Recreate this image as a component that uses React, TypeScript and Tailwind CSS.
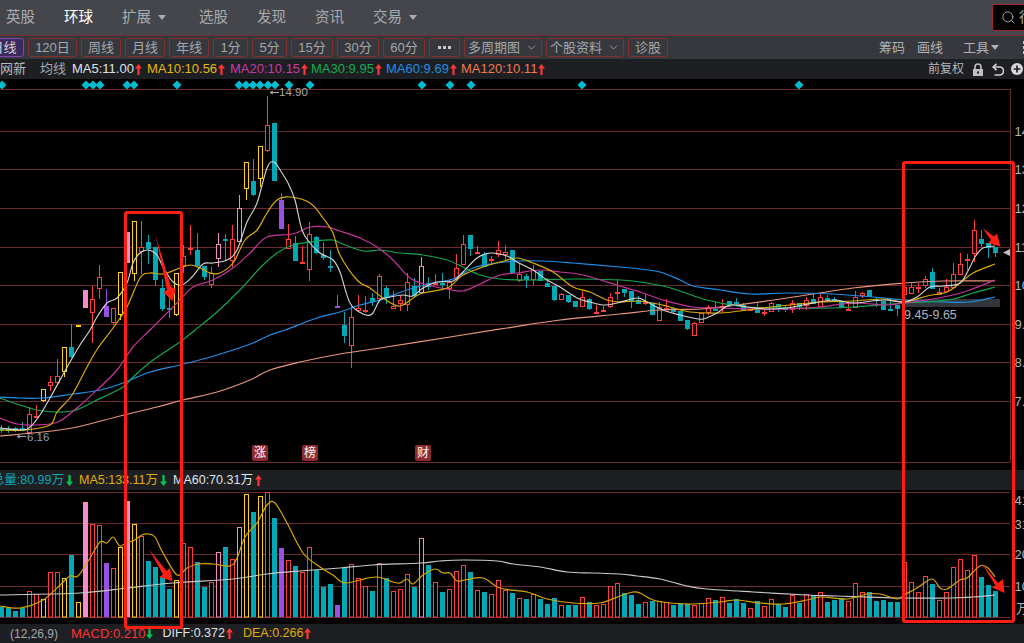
import React from "react";
import { ChevronDown, Search } from "lucide-react";

type Row = [string, number, number, number, number, number];
const D: Row[] = [
["c",428,431,425,433,607],["c",429,430,426,433,608],["c",428,430,427,432,611],["c",428,431,422,431,608],
["r",414,433,407,434,591],["r",416,417,405,417,594],["y",389,401,389,402,599],["r",382,386,376,391,572],
["r",376,383,359,385,572],["y",347,372,347,377,578],["c",347,357,324,358,555],["y",325,326,325,326,602],
["p",290,308,290,308,502],["r",299,313,286,343,524],["r",277,289,265,299,525],["v",306,317,289,317,563],
["r",308,323,308,325,568],["y",272,315,272,320,547],["p",232,263,232,263,501],["y",221,274,221,281,524],
["r",247,252,221,274,536],["c",242,249,235,264,561],["c",247,280,247,286,567],["c",288,309,279,311,577],
["c",308,310,298,318,589],["y",273,315,273,316,580],["r",256,266,245,273,543],["r",248,250,225,255,547],
["c",250,266,233,267,562],["c",266,277,266,280,587],["r",273,285,267,288,582],["h",244,259,233,267,552],
["c",239,241,234,260,547],["r",239,261,225,267,559],["h",208,242,195,242,527],["y",162,189,162,200,494],
["c",181,195,159,196,512],["y",146,179,146,187,496],["r",125,151,96,152,492],["c",123,181,123,181,518],
["v",200,229,193,229,548],["r",239,249,224,249,560],["c",243,261,236,261,566],["r",262,263,246,263,572],
["r",234,270,222,281,547],["c",237,253,236,254,570],["c",255,258,242,260,587],["c",266,267,250,272,584],
["v",306,307,295,307,605],["c",325,336,312,343,568],["r",317,346,306,368,564],["r",308,311,295,312,578],
["r",310,311,296,313,586],["c",298,302,293,306,591],["r",276,299,274,299,563],["c",288,298,286,304,578],
["r",306,309,291,309,591],["r",300,304,296,311,589],["r",282,305,273,311,574],["c",286,296,278,297,587],
["h",266,293,257,293,538],["c",283,287,277,290,565],["r",283,285,274,285,582],["c",283,284,273,290,592],
["r",282,289,280,299,589],["r",268,279,254,280,571],["r",244,265,235,265,565],["c",235,249,235,256,572],
["r",252,254,246,254,590],["c",254,267,252,267,592],["r",259,260,256,265,594],["r",250,255,241,257,580],
["r",252,255,245,260,590],["c",250,273,250,273,593],["r",274,281,263,282,598],["c",276,280,274,288,599],
["r",270,280,265,285,594],["c",271,281,271,281,599],["c",283,287,278,287,604],["c",286,300,286,301,598],
["r",294,300,293,300,605],["c",295,302,295,303,605],["c",301,307,301,307,605],["r",297,307,291,307,597],
["c",299,309,298,310,602],["r",312,313,305,313,605],["r",310,311,306,311,604],["r",297,307,293,308,586],
["r",292,293,279,300,583],["c",289,293,289,297,593],["c",291,302,291,308,595],["c",300,304,296,304,604],
["r",302,303,294,305,602],["c",303,315,303,315,601],["r",307,321,302,321,601],["r",308,309,299,309,602],
["c",308,312,308,314,605],["c",311,321,311,321,603],["c",320,329,320,330,604],["r",323,336,322,336,605],
["r",313,323,313,323,603],["r",307,313,305,315,598],["c",309,310,302,311,600],["r",306,308,299,312,597],
["c",301,304,301,307,603],["c",302,303,298,305,599],["c",305,311,303,311,603],["r",309,311,309,311,608],
["c",309,313,303,313,601],["r",312,314,309,316,606],["r",303,312,302,312,599],["c",304,308,304,312,604],
["c",307,310,305,312,607],["r",303,310,300,313,595],["c",303,307,303,310,603],["r",300,306,297,310,594],
["c",299,304,294,304,595],["r",297,307,293,307,592],["c",298,299,295,302,602],["c",299,302,297,302,600],
["c",302,308,302,308,598],["r",309,310,302,311,601],["r",297,308,291,308,583],["r",293,296,292,298,592],
["c",290,297,290,297,592],["c",299,300,297,307,601],["c",301,310,301,310,600],["c",309,310,298,310,602],
["c",305,309,305,316,602],["r",287,295,274,296,562],["r",287,294,282,294,582],["r",287,288,283,293,592],
["r",279,286,276,288,576],["c",272,289,268,289,584],["r",292,295,288,295,600],["r",287,292,279,292,592],
["r",274,288,263,288,567],["r",264,275,253,275,559],["r",259,260,254,270,570],["r",230,254,220,262,555],
["c",239,244,230,247,577],["c",243,248,243,258,585],["c",247,253,247,257,591],
];

const color: Record<string, string> = { r: "#ff3d3d", c: "#02a8b5", y: "#ffd400", p: "#f58cc8", h: "#f58cc8", v: "#9a50e4" };
const hollow = (t: string) => t === "r" || t === "y" || t === "h";

const MA5: number[][] = [[0,428],[22,430],[30,427],[40,415],[50,398],[60,380],[70,362],[80,345],[90,330],[97,317],[107,303],[117,298],[127,283],[133,263],[140,253],[148,250],[157,255],[163,267],[173,282],[182,285],[192,277],[203,264],[213,263],[227,260],[237,250],[247,222],[257,203],[267,168],[274,162],[282,173],[288,183],[295,200],[302,230],[310,243],[320,253],[333,260],[340,272],[350,303],[363,314],[372,314],[380,300],[390,297],[403,295],[413,296],[423,288],[437,282],[453,281],[463,272],[477,258],[490,253],[507,256],[517,262],[533,270],[547,280],[560,287],[577,298],[590,302],[603,305],[617,303],[637,298],[647,302],[663,310],[680,315],[693,318],[703,319],[717,313],[730,305],[747,307],[767,309],[787,308],[803,305],[833,300],[853,303],[883,300],[904,302],[917,297],[930,287],[943,286],[960,283],[970,267],[975,257],[983,248],[995,246]];
const MA10: number[][] = [[0,430],[25,430],[50,425],[57,412],[72,395],[87,367],[98,348],[113,328],[127,307],[140,278],[150,273],[163,274],[180,268],[190,265],[200,268],[210,273],[220,273],[233,263],[245,240],[257,230],[267,213],[277,200],[290,197],[310,203],[323,218],[333,233],[340,255],[357,280],[370,288],[383,298],[400,306],[420,294],[447,288],[463,275],[483,267],[500,262],[517,258],[533,263],[553,272],[573,287],[590,292],[607,300],[620,302],[637,301],[653,303],[670,307],[690,312],[720,313],[747,310],[770,307],[820,302],[853,301],[883,299],[904,302],[927,296],[947,292],[960,283],[973,273],[995,264]];
const MA20: number[][] = [[0,418],[17,424],[37,425],[58,422],[77,408],[97,390],[117,370],[133,347],[150,330],[177,303],[193,287],[213,280],[233,268],[250,253],[267,237],[293,234],[310,227],[327,227],[340,231],[360,238],[377,247],[393,260],[410,278],[427,285],[447,289],[463,291],[480,284],[500,275],[517,273],[540,270],[560,272],[583,275],[620,286],[643,293],[663,300],[693,307],[720,308],[753,309],[787,309],[820,307],[853,303],[887,305],[904,303],[927,300],[953,295],[970,290],[995,280]];
const MA30: number[][] = [[0,398],[20,405],[43,411],[72,411],[97,400],[123,387],[133,377],[153,360],[180,342],[195,330],[217,312],[240,290],[260,268],[277,253],[293,245],[317,241],[333,240],[340,243],[363,251],[380,250],[400,253],[423,255],[447,260],[463,267],[480,275],[500,279],[527,280],[573,279],[620,280],[640,282],[663,286],[680,291],[700,298],[720,303],[747,307],[787,308],[833,308],[853,307],[904,303],[927,302],[953,299],[973,293],[995,287]];
const MA60: number[][] = [[0,397],[20,398],[43,398],[73,394],[100,390],[123,383],[150,372],[180,365],[207,358],[233,350],[253,343],[270,335],[285,330],[317,318],[340,312],[360,305],[380,300],[407,290],[433,283],[453,279],[473,268],[497,263],[517,261],[543,261],[573,263],[620,267],[640,269],[660,272],[680,280],[693,286],[720,290],[750,294],[787,293],[833,294],[873,297],[904,300],[943,302],[970,302],[995,297]];
const MA120: number[][] = [[0,436],[43,432],[77,427],[120,416],[157,407],[183,400],[217,392],[250,380],[270,370],[300,362],[340,354],[380,348],[450,337],[507,328],[560,320],[620,314],[660,310],[700,309],[730,306],[787,298],[853,288],[904,283],[943,281],[995,281]];
const VMA5: number[][] = [[0,606],[20,608],[43,600],[60,585],[70,576],[78,576],[90,558],[100,542],[107,543],[113,537],[120,546],[127,542],[133,541],[142,535],[148,534],[155,537],[163,553],[177,575],[187,568],[198,564],[213,564],[230,566],[237,558],[245,537],[257,523],[267,505],[275,503],[287,523],[303,553],[320,567],[333,575],[340,581],[347,583],[360,580],[377,577],[393,582],[400,583],[407,579],[413,584],[423,575],[435,569],[443,573],[450,573],[457,581],[465,580],[483,578],[500,588],[527,592],[547,599],[573,603],[600,603],[620,596],[633,592],[640,593],[653,600],[670,603],[693,604],[720,602],[737,600],[760,603],[783,604],[807,600],[820,597],[847,599],[867,594],[880,594],[897,599],[904,595],[917,588],[932,579],[940,588],[947,589],[960,580],[967,578],[980,566],[988,568],[995,577]];
const VMA60: number[][] = [[0,595],[80,593],[127,588],[173,583],[233,579],[267,574],[300,571],[340,568],[373,565],[420,563],[440,561],[463,560],[497,561],[513,564],[540,567],[567,572],[593,573],[620,574],[637,576],[660,579],[687,586],[707,589],[753,592],[807,595],[837,596],[904,598],[950,598],[973,597],[995,595]];

const smooth = (p: number[][]) => {
  let d = `M${p[0][0]} ${p[0][1]}`;
  for (let i = 0; i < p.length - 1; i++) {
    const a = p[Math.max(0, i - 1)], b = p[i], c = p[i + 1], e = p[Math.min(p.length - 1, i + 2)];
    d += ` C${(b[0] + (c[0] - a[0]) / 6).toFixed(1)} ${(b[1] + (c[1] - a[1]) / 6).toFixed(1)} ${(c[0] - (e[0] - b[0]) / 6).toFixed(1)} ${(c[1] - (e[1] - b[1]) / 6).toFixed(1)} ${c[0]} ${c[1]}`;
  }
  return d;
};

const Line = ({ p, c, w = 1.2 }: { p: number[][]; c: string; w?: number }) => (
  <path d={smooth(p)} fill="none" stroke={c} strokeWidth={w} />
);

const Up = () => (
  <svg width="7" height="11" viewBox="0 0 7 11" className="inline-block shrink-0"><path d="M3.5 0L7 4.5H4.6V11H2.4V4.5H0Z" fill="#ff3535" /></svg>
);
const Down = () => (
  <svg width="7" height="11" viewBox="0 0 7 11" className="inline-block shrink-0"><path d="M3.5 11L7 6.5H4.6V0H2.4V6.5H0Z" fill="#00c853" /></svg>
);

const GRID = "#6a2c2f";
const diamonds = [2, 86, 93, 100, 127, 134, 177, 239, 246, 253, 260, 268, 275, 289, 310, 422, 450, 471, 582, 799];

const Nav = ({ t, w, on, caret }: { t: string; w: string; on?: boolean; caret?: boolean }) => (
  <div className={`${w} flex shrink-0 items-center gap-[7px] text-[14.5px] ${on ? "text-white" : "text-[#a9abaf]"}`}>
    <span>{t}</span>
    {caret && <span className="h-0 w-0 border-x-[4px] border-t-[5px] border-x-transparent border-t-[#a9abaf]" />}
  </div>
);

const Btn = ({ t, w, chev }: { t: string; w: string; chev?: boolean }) => (
  <div className={`${w} flex h-[19px] shrink-0 items-center justify-center gap-[5px] rounded-[3px] border border-[#85302f] text-[13px] text-[#a5a7ab]`}>
    <span>{t}</span>
    {chev && <ChevronDown size={13} strokeWidth={1.5} />}
  </div>
);

const Ma = ({ t, c, w }: { t: string; c: string; w: string }) => (
  <div className={`${w} flex shrink-0 items-center gap-[1px]`} style={{ color: c }}>
    <span>{t}</span>
    <Up />
  </div>
);

const Badge = ({ t, x }: { t: string; x: string }) => (
  <div className={`absolute top-[366px] ${x} flex h-[16px] w-[16px] items-center justify-center rounded-[2px] bg-[#8f2b2f] text-[12px] text-white`}>{t}</div>
);

const Vol = () => (
  <svg width="1024" height="134" viewBox="0 490 1024 134" className="block">
    {[492, 523, 554, 586, 617].map((y) => (
      <line key={y} x1="0" x2="1010" y1={y + 0.5} y2={y + 0.5} stroke={GRID} />
    ))}
    {D.map((r, i) => {
      const cx = 1.5 + 7 * i;
      return hollow(r[0]) ? (
        <rect key={i} x={cx - 2} y={r[5] + 0.5} width="4" height={616.5 - r[5]} fill="#000" stroke={color[r[0]]} />
      ) : (
        <rect key={i} x={cx - 2.5} y={r[5]} width="5" height={617 - r[5]} fill={color[r[0]]} />
      );
    })}
    <Line p={VMA60} c="#c9c9c9" w={1.2} />
    <Line p={VMA5} c="#d9a600" w={1.2} />
    {[["41", 505], ["31", 529], ["20", 559], ["10", 591]].map(([t, y]) => (
      <text key={t as string} x="1014.5" y={y as number} fill="#b5b5b5" fontSize="13">{t}</text>
    ))}
    <text x="1016" y="613" fill="#b5b5b5" fontSize="13">万</text>
  </svg>
);

const Main = () => (
  <svg width="1024" height="391" viewBox="0 79 1024 391" className="block">
    {diamonds.map((x) => (
      <path key={x} d={`M${x} 80.5L${x + 4.5} 85L${x} 89.5L${x - 4.5} 85Z`} fill="#00bcd0" />
    ))}
    <line x1="0" x2="1010" y1="89.5" y2="89.5" stroke={GRID} />
    <line x1="1010.5" x2="1010.5" y1="89" y2="462" stroke={GRID} />
    {[131, 169, 208, 247, 285, 324, 362, 401, 462].map((y) => (
      <line key={y} x1="0" x2="1010" y1={y + 0.5} y2={y + 0.5} stroke={GRID} />
    ))}
    <rect x="904" y="299" width="96" height="8" fill="#33363a" />
    {D.map((r, i) => {
      const cx = 1.5 + 7 * i;
      const c = color[r[0]];
      const thin = r[2] - r[1] < 3;
      return (
        <g key={i}>
          <line x1={cx} x2={cx} y1={r[3]} y2={r[4]} stroke={c} />
          {thin ? (
            <rect x={cx - 2.5} y={r[1]} width="5" height="2" fill={c} />
          ) : hollow(r[0]) ? (
            <rect x={cx - 2} y={r[1] + 0.5} width="4" height={r[2] - r[1] - 1} fill="#000" stroke={c} />
          ) : (
            <rect x={cx - 2.5} y={r[1]} width="5" height={r[2] - r[1]} fill={c} />
          )}
        </g>
      );
    })}
    <Line p={MA120} c="#e8967c" />
    <Line p={MA60} c="#1e8fe8" />
    <Line p={MA30} c="#13a650" />
    <Line p={MA20} c="#c9339c" />
    <Line p={MA10} c="#dcaa00" />
    <Line p={MA5} c="#d6d6d6" w={1.1} />
    <path d="M270 92.5H279M270 92.5L273 91M270 92.5L273 94" fill="none" stroke="#a9a9a9" />
    <text x="279" y="96" fill="#a9a9a9" fontSize="11.5">14.90</text>
    <path d="M17 436.5H26M17 436.5L20 435M17 436.5L20 438" fill="none" stroke="#8da2bc" />
    <text x="27" y="441" fill="#8da2bc" fontSize="11.5">6.16</text>
    <text x="904" y="319" fill="#a9b4c2" fontSize="12.5">9.45-9.65</text>
    <path d="M1003 252.5L1010 249V256Z" fill="#c0c0c0" />
    {[["14", 136], ["13", 174], ["12", 213], ["11", 252], ["10", 290], ["9.", 329], ["8.", 367], ["7.", 406]].map(([t, y]) => (
      <text key={t as string} x="1014.5" y={y as number} fill="#b5b5b5" fontSize="13">{t}</text>
    ))}
  </svg>
);

export default function App() {
  return (
    <div className="relative flex h-[643px] w-[1024px] flex-col overflow-hidden bg-black font-['Liberation_Sans','Noto_Sans_CJK_SC',sans-serif] text-[13px]">
      <div className="flex h-[36px] shrink-0 items-center border-b border-[#7b2c30] bg-[#44464b] pl-[6px]">
        <Nav t="英股" w="w-[58px]" />
        <Nav t="环球" w="w-[58px]" on />
        <Nav t="扩展" w="w-[77px]" caret />
        <Nav t="选股" w="w-[58px]" />
        <Nav t="发现" w="w-[58px]" />
        <Nav t="资讯" w="w-[58px]" />
        <Nav t="交易" w="w-[619px]" caret />
        <div className="flex h-[27px] w-[60px] shrink-0 items-center gap-[3px] rounded-[3px] border border-[#a2282c] bg-black pl-[8px] text-[14px] text-[#a9abaf]">
          <Search size={15} strokeWidth={1.5} className="shrink-0" />
          <span className="whitespace-nowrap">行情</span>
        </div>
      </div>
      <div className="-ml-[20px] flex h-[23px] w-[1044px] shrink-0 items-center gap-[4px] whitespace-nowrap bg-[#36383d] pl-[3px]">
        <div className="flex h-[19px] w-[41px] shrink-0 items-center justify-center rounded-[3px] border border-[#7d48b5] bg-[#3d2a5c] text-[13px] text-[#d4d4d8]">日线</div>
        <Btn t="120日" w="w-[49px]" />
        <Btn t="周线" w="w-[40px]" />
        <Btn t="月线" w="w-[40px]" />
        <Btn t="年线" w="w-[40px]" />
        <Btn t="1分" w="w-[35px]" />
        <Btn t="5分" w="w-[35px]" />
        <Btn t="15分" w="w-[42px]" />
        <Btn t="30分" w="w-[42px]" />
        <Btn t="60分" w="w-[42px]" />
        <div className="flex h-[19px] w-[31px] shrink-0 items-center justify-center gap-[2px] rounded-[3px] border border-[#85302f]">
          <span className="h-[3px] w-[3px] bg-[#c8c8c8]" /><span className="h-[3px] w-[3px] bg-[#c8c8c8]" /><span className="h-[3px] w-[3px] bg-[#c8c8c8]" />
        </div>
        <Btn t="多周期图" w="w-[78px]" chev />
        <Btn t="个股资料" w="w-[78px]" chev />
        <Btn t="诊股" w="w-[40px]" />
        <div className="ml-[207px] flex shrink-0 items-center text-[13px] text-[#b0b2b6]">
          <span>筹码</span>
          <span className="ml-[12px]">画线</span>
          <span className="ml-[20px]">工具</span>
          <span className="ml-[2px] h-0 w-0 border-x-[4px] border-t-[5px] border-x-transparent border-t-[#b0b2b6]" />
          <span className="ml-[24px] flex flex-col gap-[2px]"><span className="h-[3px] w-[3px] bg-[#c8c8c8]" /><span className="h-[3px] w-[3px] bg-[#c8c8c8]" /><span className="h-[3px] w-[3px] bg-[#c8c8c8]" /></span>
        </div>
      </div>
      <div className="-ml-[26px] flex h-[20px] w-[1050px] shrink-0 items-center whitespace-nowrap bg-[#1d1f23]">
        <span className="w-[66px] shrink-0 pr-[14px] text-right text-[#b9bbbf]">浙大网新</span>
        <span className="w-[32px] shrink-0 text-[#a5a7ab]">均线</span>
        <Ma t="MA5:11.00" c="#dfe3e8" w="w-[75px]" />
        <Ma t="MA10:10.56" c="#e6b800" w="w-[83px]" />
        <Ma t="MA20:10.15" c="#c93aa3" w="w-[81px]" />
        <Ma t="MA30:9.95" c="#0fae4f" w="w-[75px]" />
        <Ma t="MA60:9.69" c="#1e8fe8" w="w-[75px]" />
        <Ma t="MA120:10.11" c="#ef7b52" w="w-[467px]" />
        <span className="w-[45px] shrink-0 text-[12px] text-[#b4b7bb]">前复权</span>
        <svg className="shrink-0" width="10" height="13" viewBox="0 0 10 13"><path d="M2 6V4a3 3 0 0 1 6 0v2" fill="none" stroke="#c0c0c0" strokeWidth="1.6" /><path d="M0 6h10v7H0z" fill="#c0c0c0" /><path d="M4 8.5h2v2H4z" fill="#1d1f23" /></svg>
        <svg className="ml-[9px] shrink-0" width="12" height="13" viewBox="0 0 12 13"><path d="M4.5 0.8L1.2 4 4.5 7.2" fill="none" stroke="#d0d0d0" strokeWidth="1.7" /><path d="M1.5 4h6a3.7 3.7 0 0 1 0 8H2.5" fill="none" stroke="#d0d0d0" strokeWidth="1.7" /></svg>
        <svg className="ml-[7px] shrink-0" width="12" height="12" viewBox="0 0 13 13"><circle cx="6.5" cy="6.5" r="6.5" fill="#d8d8d8" /><path d="M5.6 2.8h1.8v2.8h2.8v1.8H7.4v2.8H5.6V7.4H2.8V5.6h2.8z" fill="#1d1f23" /></svg>
      </div>
      <div className="relative h-[391px] shrink-0">
        <Main />
        <Badge t="涨" x="left-[252px]" />
        <Badge t="榜" x="left-[302px]" />
        <Badge t="财" x="left-[415px]" />
      </div>
      <div className="flex h-[20px] shrink-0 items-center whitespace-nowrap bg-[#1d1f23] text-[12.5px]">
        <span className="flex w-[64px] shrink-0 justify-end text-[#0aa7b5]">总量:80.99万</span>
        <span className="ml-[2px] flex shrink-0"><Down /></span>
        <span className="ml-[6px] text-[#e0b000]">MA5:133.11万</span>
        <span className="ml-[2px] flex shrink-0"><Down /></span>
        <span className="ml-[6px] text-[#dfe3e8]">MA60:70.31万</span>
        <span className="ml-[2px] flex shrink-0"><Up /></span>
      </div>
      <div className="h-[134px] shrink-0"><Vol /></div>
      <div className="flex h-[19px] shrink-0 items-center whitespace-nowrap bg-[#1d1f23] pl-[10px]">
        <span className="w-[61px] shrink-0 text-[12px] text-[#a5a7ab]">(12,26,9)</span>
        <span className="text-[#ff3535]">MACD:0.210</span>
        <span className="ml-[1px] flex shrink-0"><Down /></span>
        <span className="ml-[9px] text-[12.5px] text-[#dfe3e8]">DIFF:0.372</span>
        <span className="ml-[1px] flex shrink-0"><Up /></span>
        <span className="ml-[10px] text-[12.5px] text-[#e0b000]">DEA:0.266</span>
        <span className="ml-[1px] flex shrink-0"><Up /></span>
      </div>
      <div className="pointer-events-none absolute left-[124px] top-[211px] h-[418px] w-[59px] rounded-[3px] border-[3px] border-[#ff1e12]" />
      <div className="pointer-events-none absolute left-[902px] top-[161px] h-[462px] w-[113px] rounded-[3px] border-[3px] border-[#ff1e12]" />
      <svg className="pointer-events-none absolute left-0 top-0" width="1024" height="643" viewBox="0 0 1024 643">
        <path d="M155.5 235L171 287L176 289L172.5 301L163 292L167 290Z" fill="#ff1e12" />
        <path d="M149 549L166.5 571L170 568L172.5 581L159 577L163 574.5Z" fill="#ff1e12" />
        <path d="M982.5 228L994 236.5L997 233.5L1000.5 246.5L988 243L991 240Z" fill="#ff1e12" />
        <path d="M981.5 563L998 583L1003 579L1004.5 593L992 587.5L995.5 585.5Z" fill="#ff1e12" />
      </svg>
    </div>
  );
}
